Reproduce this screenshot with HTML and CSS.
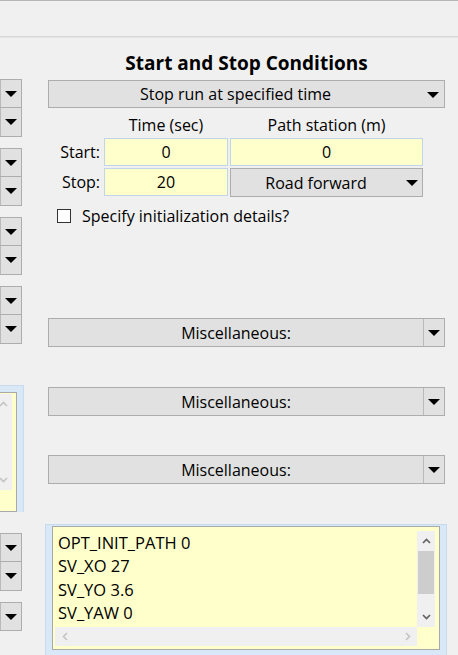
FILE: index.html
```html
<!DOCTYPE html>
<html>
<head>
<meta charset="utf-8">
<link rel="stylesheet" href="styles.css">
</head>
<body>
<div class="topbar"></div>
<div class="content">
  <div class="left-col">
    <div class="left-inner">
      <div class="lgroup first">
        <div class="lrow"><span class="ltext"></span><span class="larrow"><svg width="12" height="6" viewBox="0 0 12 6"><path d="M0 0H12L6 6Z" fill="#000"/></svg></span></div>
        <div class="lrow second"><span class="ltext"></span><span class="larrow"><svg width="12" height="6" viewBox="0 0 12 6"><path d="M0 0H12L6 6Z" fill="#000"/></svg></span></div>
      </div>
      <div class="lgroup">
        <div class="lrow"><span class="ltext"></span><span class="larrow"><svg width="12" height="6" viewBox="0 0 12 6"><path d="M0 0H12L6 6Z" fill="#000"/></svg></span></div>
        <div class="lrow second"><span class="ltext"></span><span class="larrow"><svg width="12" height="6" viewBox="0 0 12 6"><path d="M0 0H12L6 6Z" fill="#000"/></svg></span></div>
      </div>
      <div class="lgroup">
        <div class="lrow"><span class="ltext"></span><span class="larrow"><svg width="12" height="6" viewBox="0 0 12 6"><path d="M0 0H12L6 6Z" fill="#000"/></svg></span></div>
        <div class="lrow second"><span class="ltext"></span><span class="larrow"><svg width="12" height="6" viewBox="0 0 12 6"><path d="M0 0H12L6 6Z" fill="#000"/></svg></span></div>
      </div>
      <div class="lgroup">
        <div class="lrow"><span class="ltext"></span><span class="larrow"><svg width="12" height="6" viewBox="0 0 12 6"><path d="M0 0H12L6 6Z" fill="#000"/></svg></span></div>
        <div class="lrow second"><span class="ltext"></span><span class="larrow"><svg width="12" height="6" viewBox="0 0 12 6"><path d="M0 0H12L6 6Z" fill="#000"/></svg></span></div>
      </div>
      <div class="tawrap left-ta">
        <div class="ta">
          <div class="ta-text"></div>
          <div class="vscroll">
            <div class="sbtn"><svg width="9" height="6" viewBox="0 0 9 6"><path d="M1 5L4.5 1.5L8 5" fill="none" stroke="#c4c4c4" stroke-width="1.6"/></svg></div>
            <div class="track"></div>
            <div class="sbtn"><svg width="9" height="6" viewBox="0 0 9 6"><path d="M1 1L4.5 4.5L8 1" fill="none" stroke="#c4c4c4" stroke-width="1.6"/></svg></div>
          </div>
          <div class="hscroll"></div>
          <div class="corner"></div>
        </div>
      </div>
      <div class="lgroup bottom-group">
        <div class="lrow"><span class="ltext"></span><span class="larrow"><svg width="12" height="6" viewBox="0 0 12 6"><path d="M0 0H12L6 6Z" fill="#000"/></svg></span></div>
        <div class="lrow second"><span class="ltext"></span><span class="larrow"><svg width="12" height="6" viewBox="0 0 12 6"><path d="M0 0H12L6 6Z" fill="#000"/></svg></span></div>
      </div>
      <div class="lgroup single">
        <div class="lrow tall"><span class="ltext"></span><span class="larrow"><svg width="12" height="6" viewBox="0 0 12 6"><path d="M0 0H12L6 6Z" fill="#000"/></svg></span></div>
      </div>
    </div>
  </div>

  <div class="panel">
    <h2 class="title">Start and Stop Conditions</h2>
    <div class="combo stop-combo">
      <span class="combo-text">Stop run at specified time</span>
      <span class="combo-arrow"><svg width="12" height="6" viewBox="0 0 12 6"><path d="M0 0H12L6 6Z" fill="#000"/></svg></span>
    </div>
    <div class="times">
      <span></span>
      <span class="colhead">Time (sec)</span>
      <span class="colhead">Path station (m)</span>
      <span class="rowlabel">Start:</span>
      <div class="field">0</div>
      <div class="field">0</div>
      <span class="rowlabel">Stop:</span>
      <div class="field">20</div>
      <div class="combo road">
        <span class="combo-text">Road forward</span>
        <span class="combo-arrow"><svg width="12" height="6" viewBox="0 0 12 6"><path d="M0 0H12L6 6Z" fill="#000"/></svg></span>
      </div>
    </div>
    <div class="check"><span class="box"></span><span>Specify initialization details?</span></div>

    <div class="combo misc first-misc">
      <span class="combo-text">Miscellaneous:</span>
      <span class="combo-arrow"><svg width="12" height="6" viewBox="0 0 12 6"><path d="M0 0H12L6 6Z" fill="#000"/></svg></span>
    </div>
    <div class="combo misc">
      <span class="combo-text">Miscellaneous:</span>
      <span class="combo-arrow"><svg width="12" height="6" viewBox="0 0 12 6"><path d="M0 0H12L6 6Z" fill="#000"/></svg></span>
    </div>
    <div class="combo misc third-misc">
      <span class="combo-text">Miscellaneous:</span>
      <span class="combo-arrow"><svg width="12" height="6" viewBox="0 0 12 6"><path d="M0 0H12L6 6Z" fill="#000"/></svg></span>
    </div>

    <div class="tawrap right-ta">
      <div class="ta">
        <div class="ta-text">
          <div>OPT_INIT_PATH 0</div>
          <div>SV_XO 27</div>
          <div>SV_YO 3.6</div>
          <div>SV_YAW 0</div>
        </div>
        <div class="vscroll">
          <div class="sbtn"><svg width="9" height="6" viewBox="0 0 9 6"><path d="M1 5L4.5 1.5L8 5" fill="none" stroke="#606060" stroke-width="1.6"/></svg></div>
          <div class="thumb"></div>
          <div class="track"></div>
          <div class="sbtn"><svg width="9" height="6" viewBox="0 0 9 6"><path d="M1 1L4.5 4.5L8 1" fill="none" stroke="#606060" stroke-width="1.6"/></svg></div>
        </div>
        <div class="hscroll">
          <div class="hbtn"><svg width="6" height="9" viewBox="0 0 6 9"><path d="M5 1L1.5 4.5L5 8" fill="none" stroke="#c4c4c4" stroke-width="1.6"/></svg></div>
          <div class="htrack"></div>
          <div class="hbtn"><svg width="6" height="9" viewBox="0 0 6 9"><path d="M1 1L4.5 4.5L1 8" fill="none" stroke="#c4c4c4" stroke-width="1.6"/></svg></div>
        </div>
        <div class="corner"></div>
      </div>
    </div>
  </div>
</div>
</body>
</html>
```

FILE: styles.css
```css
* { box-sizing: border-box; }
html, body { margin: 0; padding: 0; }
body {
  width: 458px;
  height: 655px;
  overflow: hidden;
  background: #f0f0f0;
  font-family: "Open Sans", "Noto Sans", sans-serif;
  font-size: 16px;
  color: #000;
}
.topbar {
  height: 37px;
  border-top: 1px solid #b5b5b5;
  border-bottom: 1px solid #d6d6d6;
  box-shadow: 0 1px 0 #e4e4e4;
}
.content { display: flex; align-items: flex-start; }

/* left, clipped column */
.left-col { width: 24px; flex: none; overflow: hidden; height: 618px; }
.left-inner { width: 397px; margin-left: -375px; display: flex; flex-direction: column; }
.lgroup { margin-top: 11px; border: 1px solid #adadad; background: #e1e1e1; }
.lgroup.first { margin-top: 42px; }
.lgroup.bottom-group { margin-top: 21px; }
.lrow { display: flex; height: 27px; }
.lrow.second { height: 29px; border-top: 1px solid #adadad; }
.lrow.tall { height: 27px; }
.ltext { flex: 1; }
.larrow {
  width: 21px; flex: none; border-left: 1px solid #b9b9b9;
  display: flex; align-items: center; justify-content: center;
}

/* right panel */
.panel { width: 397px; margin-left: 24px; flex: none; display: flex; flex-direction: column; }
.title {
  margin: 0; padding-top: 13px; line-height: 26px;
  font-size: 19px; font-weight: 700; text-align: center;
}
.combo { display: flex; height: 29px; background: #e1e1e1; border: 1px solid #adadad; }
.combo-text { flex: 1; display: flex; align-items: center; justify-content: center; white-space: nowrap; }
.combo-arrow { width: 21px; flex: none; display: flex; align-items: center; justify-content: center; }
.misc .combo-arrow { border-left: 1px solid #b9b9b9; }
.stop-combo { height: 28px; margin-top: 4px; }
.stop-combo .combo-arrow { width: 22px; padding-top: 1px; }

.times {
  display: grid;
  grid-template-columns: 54px 124px 193px;
  grid-template-rows: 28px 28px 28px;
  column-gap: 2px; row-gap: 2px;
}
.colhead { align-self: end; text-align: center; line-height: 22px; }
.rowlabel { text-align: right; padding-right: 2px; line-height: 28px; }
.field {
  background: #ffffcc; border: 1px solid #bed5ec;
  display: flex; align-items: center; justify-content: center;
}
.road { height: 29px; }

.check { display: flex; align-items: center; height: 22px; margin-top: 9px; }
.box {
  width: 14px; height: 14px; margin-left: 9px; margin-right: 11px;
  border: 1px solid #333; background: #fff; flex: none;
}
.combo.misc { margin-top: 40px; }
.combo.misc.first-misc { margin-top: 91px; }
.combo.misc.third-misc { margin-top: 39px; }

/* text areas */
.tawrap {
  margin: 40px -2px 0 -3px;
  background: #d9e8f6;
  border: 1px solid #c6dbf0;
  padding: 1px 6px 6px 6px;
}
.ta {
  height: 124px;
  border: 1px solid #a9a9a9;
  background: #ffffcc;
  display: grid;
  grid-template-columns: 1fr 18px;
  grid-template-rows: 1fr 19px;
  padding: 4px 4px 3px 2px;
}
.tawrap.left-ta { margin-top: 41px; padding-top: 6px; padding-bottom: 0; border-bottom: 0; }
.left-ta .ta { height: 120px; padding: 1px 4px 2px 2px; }
.ta-text { padding-left: 3px; font-size: 16.5px; line-height: 23.3px; white-space: nowrap; overflow: hidden; }
.vscroll { background: #f0f0f0; display: flex; flex-direction: column; }
.sbtn { height: 20px; flex: none; display: flex; align-items: center; justify-content: center; }
.thumb { height: 43px; background: #cdcdcd; margin: 0 1px; flex: none; }
.track { flex: 1; }
.hscroll { background: #f0f0f0; display: flex; }
.hbtn { width: 19px; flex: none; display: flex; align-items: center; justify-content: center; }
.htrack { flex: 1; }
.corner { background: #ffffcc; }
```
